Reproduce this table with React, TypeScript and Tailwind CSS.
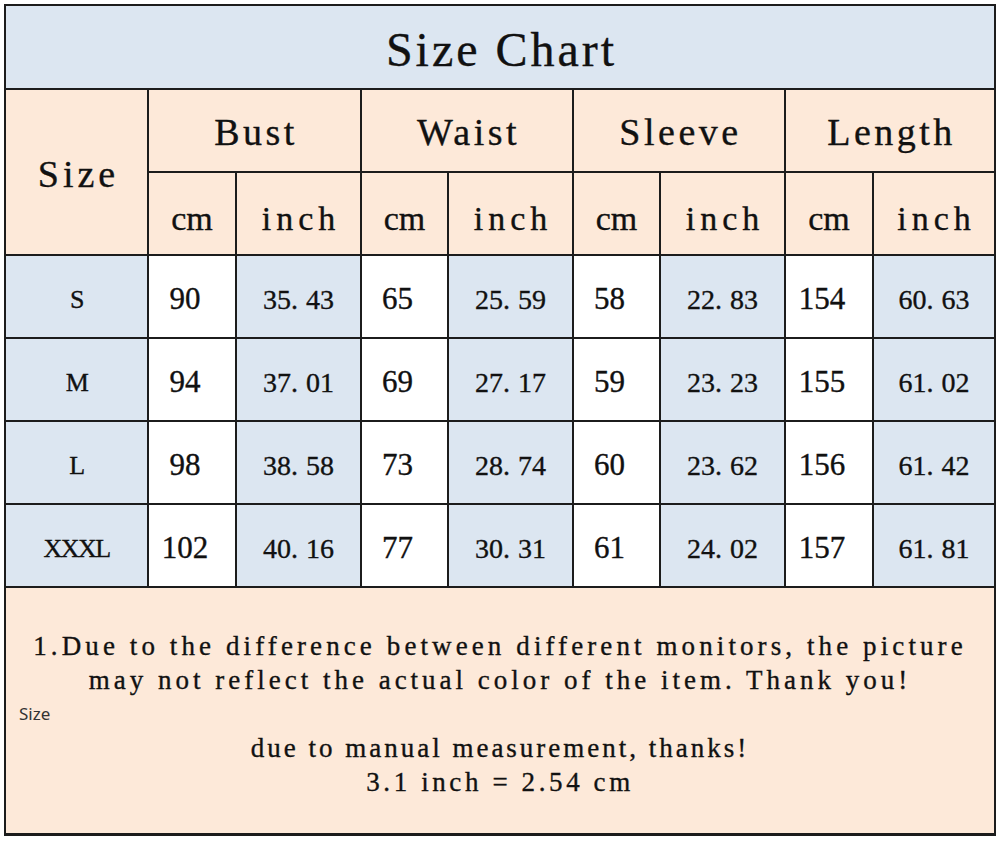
const serif = "font-['Liberation_Serif','Times_New_Roman',serif]";

const rows = [
  { size: "S", values: [["90", "35.43"], ["65", "25.59"], ["58", "22.83"], ["154", "60.63"]] },
  { size: "M", values: [["94", "37.01"], ["69", "27.17"], ["59", "23.23"], ["155", "61.02"]] },
  { size: "L", values: [["98", "38.58"], ["73", "28.74"], ["60", "23.62"], ["156", "61.42"]] },
  { size: "XXXL", values: [["102", "40.16"], ["77", "30.31"], ["61", "24.02"], ["157", "61.81"]] },
];

const groups = ["Bust", "Waist", "Sleeve", "Length"];

// column widths, border centre to border centre
const cols = [143, 88, 125, 87, 125, 87, 125, 88, 122];

const line = "border-2 border-[#1c1c1c]";

function Inch({ value }: { value: string }) {
  const [a, b] = value.split(".");
  return (
    <span>
      {a}.<span className="ml-[8px]">{b}</span>
    </span>
  );
}

export default function App() {
  return (
    <div className={`min-h-screen bg-white pt-[4px] pl-[4px] text-[#111] [-webkit-text-stroke:0.35px_#111] ${serif}`}>
      <table className="table-fixed border-collapse w-[992px]">
        <colgroup>
          {cols.map((w, i) => (
            <col key={i} style={{ width: w }} />
          ))}
        </colgroup>
        <tbody>
          <tr>
            <td colSpan={9} className={`${line} h-[84px] bg-[#dce6f1] text-center text-[48px] tracking-[3px] pl-[3px] pt-[5px]`}>
              Size Chart
            </td>
          </tr>

          <tr>
            <td rowSpan={2} className={`${line} bg-[#fde9d9] text-center text-[38px] tracking-[4px] pl-[4px] pt-[4px]`}>
              Size
            </td>
            {groups.map((g) => (
              <td key={g} colSpan={2} className={`${line} h-[83px] bg-[#fde9d9] text-center text-[38px] tracking-[3.5px] pl-[3px] pt-[4px]`}>
                {g}
              </td>
            ))}
          </tr>

          <tr>
            {groups.map((g) => (
              <>
                <td key={g + "cm"} className={`${line} h-[83px] bg-[#fde9d9] text-center text-[34px] pt-[10px]`}>
                  cm
                </td>
                <td key={g + "in"} className={`${line} bg-[#fde9d9] text-center text-[34px] tracking-[5px] pl-[5px] pt-[10px]`}>
                  inch
                </td>
              </>
            ))}
          </tr>

          {rows.map((r) => (
            <tr key={r.size}>
              <td className={`${line} h-[83px] bg-[#dce6f1] text-center text-[26px] tracking-[-1.5px] pt-[6px]`}>
                {r.size}
              </td>
              {r.values.map(([cm, inch], i) => (
                <>
                  <td key={i + "c"} className={`${line} bg-white text-center text-[31px] pr-[14px] pt-[6px]`}>
                    {cm}
                  </td>
                  <td key={i + "i"} className={`${line} bg-[#dce6f1] text-center text-[28px] pt-[6px]`}>
                    <Inch value={inch} />
                  </td>
                </>
              ))}
            </tr>
          ))}

          <tr>
            <td colSpan={9} className={`${line} border-b-[3px] h-[247px] bg-[#fde9d9] align-middle pt-[8px]`}>
              <div className="flex flex-col items-center text-[27px] leading-[34px]">
                <p className="tracking-[4.1px]">1.Due to the difference between different monitors, the picture</p>
                <p className="tracking-[4px]">may not reflect the actual color of the item. Thank you!</p>
                <p className="self-start pl-[13px] text-[17px] tracking-normal text-[#333] [-webkit-text-stroke:0px] font-['Noto_Sans',sans-serif]">
                  Size
                </p>
                <p className="tracking-[3px]">due to manual measurement, thanks!</p>
                <p className="tracking-[3.6px]">3.1 inch = 2.54 cm</p>
              </div>
            </td>
          </tr>
        </tbody>
      </table>
    </div>
  );
}
